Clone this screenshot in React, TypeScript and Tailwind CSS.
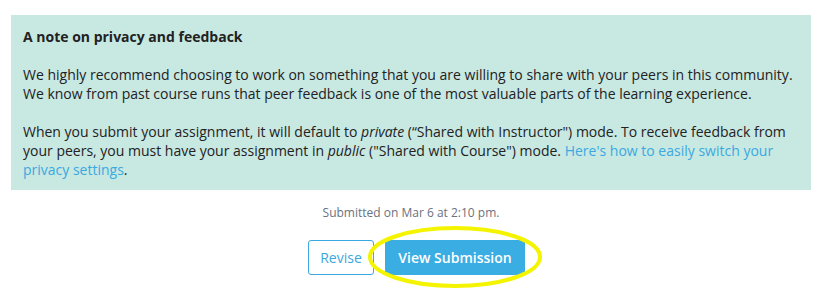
export default function App() {
  return (
    <div className="w-[828px] h-[302px] bg-white pt-[15px] pl-[11px] pr-[17px] font-['Open_Sans',sans-serif] text-[14px] leading-[19px] text-[#222]">
      {/* Privacy note */}
      <div className="bg-[#c8e8e2] pt-[12px] pb-[11px] px-[12px]">
        <p className="font-bold">A note on privacy and feedback</p>
        <p className="mt-[19px]">
          We highly recommend choosing to work on something that you are willing to share with your peers in this community. We know from past course runs that peer feedback is one of the most valuable parts of the learning experience.
        </p>
        <p className="mt-[19px]">
          When you submit your assignment, it will default to <em>private</em> (“Shared with Instructor") mode. To receive feedback from your peers, you must have your assignment in <em>public</em> ("Shared with Course") mode.{' '}
          <a className="text-[#3ba8e0]">Here's how to easily switch your privacy settings</a>.
        </p>
      </div>

      {/* Submission status */}
      <p className="mt-[14px] text-center text-[12px] leading-[17px] text-[#6b7280]">Submitted on Mar 6 at 2:10 pm.</p>

      <div className="mt-[19px] flex justify-center gap-[11px] pl-[11px]">
        <button className="h-[35px] w-[66px] rounded-[3px] border border-[#3ba8e0] text-[#3ba8e0] text-[14px]">
          Revise
        </button>
        <div className="relative">
          <button className="h-[35px] w-[140px] rounded-[2px] bg-[#3aade3] text-white text-[14px] font-semibold">
            View Submission
          </button>
          {/* highlight ring */}
          <svg className="absolute left-[-18px] top-[-15px] pointer-events-none" width="176" height="64" viewBox="0 0 176 64">
            <ellipse cx="88" cy="32" rx="85" ry="29" fill="none" stroke="#f4f400" strokeWidth="4" />
          </svg>
        </div>
      </div>
    </div>
  )
}
